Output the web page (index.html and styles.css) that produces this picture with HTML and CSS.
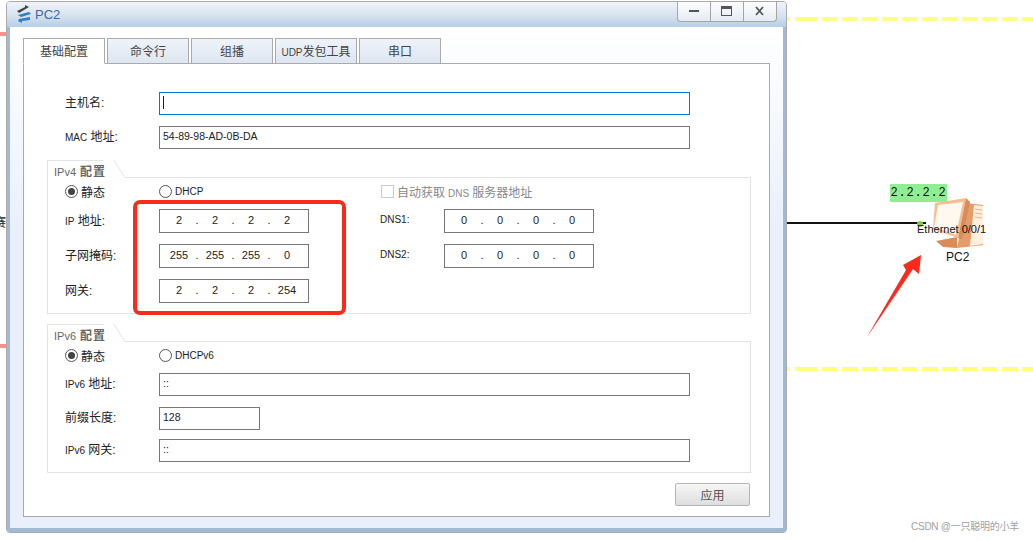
FILE: index.html
```html
<!DOCTYPE html>
<html lang="zh-CN">
<head>
    <meta charset="UTF-8">
    <meta name="viewport" content="width=device-width, initial-scale=1.0">
    <title>PC2</title>
    <link rel="stylesheet" href="styles.css">
</head>
<body>
    <!-- topology canvas behind the dialog -->
    <div class="canvas">
        <div class="dash dash-top"></div>
        <div class="dash dash-bottom"></div>
        <div class="pink pink-top"></div>
        <div class="pink pink-bottom"></div>
        <div class="cut-label">赛</div>
        <div class="link"></div>
        <div class="port-dot"></div>
        <div class="ip-tag">2.2.2.2</div>
        <svg class="pc-icon" width="54" height="56" viewBox="0 0 54 56">
            <path d="M34 6 L51 8 L51 48 L25 51 Z" fill="#e39c6c"/>
            <path d="M42 8 L51 9 L51 47 L38 49 Z" fill="#fff0e0"/>
            <path d="M43 12 L50 13 M43 16 L50 17 M43 20 L50 21" stroke="#e8b48c" stroke-width="1.2"/>
            <path d="M4 44 L25 40 L25 51 L11 50 Z" fill="#d98c56"/>
            <path d="M3 6 L34 1 L26 41 L1 32 Z" fill="#f6bd90"/>
            <path d="M6 8 L31 5 L24 38 L2 30 Z" fill="#fff8ee"/>
            <path d="M34 1 L38 5 L30 42 L26 41 Z" fill="#d98c56"/>
        </svg>
        <div class="port-label">Ethernet 0/0/1</div>
        <div class="pc-label">PC2</div>
        <svg class="arrow" width="60" height="86" viewBox="0 0 60 86">
            <path d="M1 84 L40 17 L37 12 L55 2 L53 21 L47 16 Z" fill="#fc2a1c"/>
        </svg>
        <div class="watermark">CSDN @一只聪明的小羊</div>
    </div>

    <div class="dialog">
        <div class="titlebar">
            <svg class="app-icon" width="16" height="19" viewBox="0 0 16 19">
                <path d="M1 6 L9 2 L9 0 L13 2 L8 5 L3 8 Z" fill="#444"/>
                <path d="M2 10 L13 7 L15 9 L5 12 Z" fill="#2f7fc4"/>
                <path d="M3 14 L14 12 L14 15 L6 16 L6 18 L2 16 Z" fill="#2f7fc4"/>
            </svg>
            <span class="title-text">PC2</span>
            <div class="win-buttons">
                <div class="win-btn">
                    <svg width="11" height="4" viewBox="0 0 11 4"><rect y="1" width="10" height="2" fill="#555"/></svg>
                </div>
                <div class="win-btn">
                    <svg width="12" height="11" viewBox="0 0 12 11"><rect x="0.5" y="0.5" width="10" height="9" fill="none" stroke="#555"/><rect x="0.5" y="0.5" width="10" height="2.5" fill="#555"/></svg>
                </div>
                <div class="win-btn">
                    <svg width="10" height="10" viewBox="0 0 10 10"><path d="M1 1 L8 9 M8 1 L1 9" stroke="#555" stroke-width="1.8"/></svg>
                </div>
            </div>
        </div>

        <div class="dialog-body">
            <div class="tabs">
                <div class="tab active">基础配置</div>
                <div class="tab">命令行</div>
                <div class="tab">组播</div>
                <div class="tab"><span class="en">UDP</span>发包工具</div>
                <div class="tab">串口</div>
            </div>

            <div class="panel">
                <div class="rows top-rows">
                    <div class="row">
                        <label class="row-label">主机名:</label>
                        <div class="field wide focused"><span class="caret"></span></div>
                    </div>
                    <div class="row">
                        <label class="row-label"><span class="en">MAC</span> 地址:</label>
                        <div class="field wide">54-89-98-AD-0B-DA</div>
                    </div>
                </div>

                <div class="group">
                    <div class="legend">IPv4 <b>配置</b></div>
                    <div class="group-box">
                        <div class="row radio-row">
                            <div class="radio-cell"><span class="radio checked"></span>静态</div>
                            <div class="radio-cell"><span class="radio"></span><span class="en">DHCP</span></div>
                            <div class="auto-dns"><span class="checkbox"></span><span>自动获取<span class="en dns-word">DNS</span>服务器地址</span></div>
                        </div>
                        <div class="row">
                            <label class="row-label"><span class="en">IP</span> 地址:</label>
                            <div class="ip-field"><span>2</span><i>.</i><span>2</span><i>.</i><span>2</span><i>.</i><span>2</span></div>
                            <label class="dns-label">DNS1:</label>
                            <div class="ip-field"><span>0</span><i>.</i><span>0</span><i>.</i><span>0</span><i>.</i><span>0</span></div>
                        </div>
                        <div class="row">
                            <label class="row-label">子网掩码:</label>
                            <div class="ip-field"><span>255</span><i>.</i><span>255</span><i>.</i><span>255</span><i>.</i><span>0</span></div>
                            <label class="dns-label">DNS2:</label>
                            <div class="ip-field"><span>0</span><i>.</i><span>0</span><i>.</i><span>0</span><i>.</i><span>0</span></div>
                        </div>
                        <div class="row">
                            <label class="row-label">网关:</label>
                            <div class="ip-field"><span>2</span><i>.</i><span>2</span><i>.</i><span>2</span><i>.</i><span>254</span></div>
                        </div>
                    </div>
                </div>

                <div class="group group-v6">
                    <div class="legend">IPv6 <b>配置</b></div>
                    <div class="group-box">
                        <div class="row radio-row">
                            <div class="radio-cell"><span class="radio checked"></span>静态</div>
                            <div class="radio-cell"><span class="radio"></span><span class="en">DHCPv6</span></div>
                        </div>
                        <div class="row">
                            <label class="row-label"><span class="en">IPv6</span> 地址:</label>
                            <div class="field wide">::</div>
                        </div>
                        <div class="row">
                            <label class="row-label">前缀长度:</label>
                            <div class="field short">128</div>
                        </div>
                        <div class="row tight">
                            <label class="row-label"><span class="en">IPv6</span> 网关:</label>
                            <div class="field wide">::</div>
                        </div>
                    </div>
                </div>

                <div class="actions">
                    <button class="apply-btn" type="button">应用</button>
                </div>
            </div>
        </div>
    </div>

    <!-- annotation drawn over the screenshot -->
    <div class="red-box"></div>
</body>
</html>
```

FILE: styles.css
```css
body {
    font-family: "Liberation Sans", "Noto Sans CJK SC", sans-serif;
    font-size: 12px;
    color: #222;
    background-color: #fff;
    margin: 0;
    width: 1033px;
    height: 541px;
    position: relative;
    overflow: hidden;
}

.en {
    font-size: 10px;
}

/* canvas items */
.dash {
    position: absolute;
    left: 786px;
    width: 247px;
    height: 4px;
    background: repeating-linear-gradient(90deg, #ffff80 0, #ffff80 15px, transparent 15px, transparent 20px);
    background-position: 16px 0;
}

.dash-top {
    top: 17px;
}

.dash-bottom {
    top: 367px;
}

.pink {
    position: absolute;
    left: 0;
    width: 6px;
    height: 4px;
    background-color: #ff8f8f;
}

.pink-top {
    top: 32px;
}

.pink-bottom {
    top: 344px;
}

.cut-label {
    position: absolute;
    left: -6px;
    top: 213px;
    font-size: 12px;
}

.link {
    position: absolute;
    left: 786px;
    top: 222px;
    width: 140px;
    height: 2px;
    background-color: #111;
}

.port-dot {
    position: absolute;
    left: 917px;
    top: 221px;
    width: 6px;
    height: 6px;
    border-radius: 50%;
    background-color: #7ed23e;
}

.ip-tag {
    position: absolute;
    left: 890px;
    top: 184px;
    width: 57px;
    height: 18px;
    line-height: 18px;
    text-align: center;
    background-color: #90ee90;
    font-family: "Liberation Mono", monospace;
    font-size: 12px;
    color: #111;
    letter-spacing: 0.8px;
}

.pc-icon {
    position: absolute;
    left: 932px;
    top: 197px;
}

.port-label {
    position: absolute;
    left: 917px;
    top: 223px;
    font-size: 11px;
    color: #111;
    white-space: nowrap;
}

.pc-label {
    position: absolute;
    left: 946px;
    top: 250px;
    font-size: 12px;
    color: #111;
}

.arrow {
    position: absolute;
    left: 866px;
    top: 253px;
}

.watermark {
    position: absolute;
    left: 911px;
    top: 518px;
    font-size: 10px;
    color: #a0a0a0;
    letter-spacing: -0.25px;
    white-space: nowrap;
}

/* dialog window */
.dialog {
    position: absolute;
    left: 6px;
    top: 1px;
    width: 781px;
    height: 532px;
    box-sizing: border-box;
    border: 1px solid #aaa;
    border-radius: 4px;
    display: flex;
    flex-direction: column;
    overflow: hidden;
}

.titlebar {
    height: 25px;
    flex-shrink: 0;
    display: flex;
    align-items: center;
    padding-left: 9px;
    background: linear-gradient(#f0f3f9, #d9e4f0 50%, #b5cee5);
    position: relative;
}

.app-icon {
    margin-right: 3px;
}

.title-text {
    font-size: 13px;
    color: #3a6ba5;
}

.win-buttons {
    margin-left: auto;
    margin-right: 9px;
    align-self: flex-start;
    display: flex;
    height: 21px;
    box-sizing: border-box;
    margin-top: -1px;
    border: 1px solid #a5a5a5;
    border-top: none;
    border-radius: 0 0 4px 4px;
    background: linear-gradient(#fdfdfe, #e6ecf3);
}

.win-btn {
    width: 32px;
    display: flex;
    align-items: center;
    justify-content: center;
    border-left: 1px solid #a5a5a5;
}

.win-btn:first-child {
    border-left: none;
}

.dialog-body {
    flex: 1;
    display: flex;
    flex-direction: column;
    min-height: 0;
    border: 3px solid #9fbad4;
    border-top: none;
    border-bottom-width: 4px;
    padding: 11px 13px 11px 13px;
    background: linear-gradient(#fff, #e9f0fc 40%);
}

/* tabs */
.tabs {
    display: flex;
    gap: 2px;
    margin-bottom: -1px;
}

.tab {
    width: 82px;
    height: 26px;
    box-sizing: border-box;
    line-height: 26px;
    text-align: center;
    color: #444;
    border: 1px solid #aaa;
    background: linear-gradient(#eff3f9, #dde6f1);
    white-space: nowrap;
}

.tab.active {
    background: #fff;
    border-bottom-color: #fff;
    position: relative;
    z-index: 1;
}

.panel {
    flex: 1;
    border: 1px solid #aaa;
    background-color: #fff;
    padding: 28px 18px 0 23px;
}

/* form rows */
.rows {
    display: flex;
    flex-direction: column;
    gap: 11px;
    padding-left: 18px;
}

.row {
    display: flex;
    align-items: center;
}

.row-label {
    width: 94px;
    flex-shrink: 0;
    padding-bottom: 4px;
}

.dns-label {
    width: 64px;
    margin-left: 71px;
    flex-shrink: 0;
    padding-bottom: 4px;
    font-size: 10px;
}

.field {
    height: 23px;
    box-sizing: border-box;
    border: 1px solid #777;
    line-height: 19px;
    padding-left: 3px;
    font-size: 10.5px;
}

.field.wide {
    width: 531px;
}

.field.short {
    width: 101px;
}

.field.focused {
    border-color: #0078d7;
    position: relative;
}

.caret {
    display: block;
    width: 1px;
    height: 13px;
    margin-top: 3px;
    background-color: #222;
}

.ip-field {
    width: 150px;
    height: 24px;
    box-sizing: border-box;
    border: 1px solid #777;
    padding: 0 0 3px 4px;
    display: flex;
    align-items: center;
    font-size: 11px;
}

.ip-field span {
    width: 30px;
    text-align: center;
}

.ip-field i {
    width: 6px;
    font-style: normal;
    text-align: center;
}

/* group boxes */
.group {
    margin-top: 11px;
}

.group-v6 {
    margin-top: 10px;
}

.legend {
    width: 67px;
    height: 18px;
    box-sizing: border-box;
    margin-bottom: -1px;
    padding-left: 6px;
    line-height: 22px;
    font-size: 11px;
    color: #666;
    border: 1px solid #e3e3e3;
    border-width: 1px 0 0 1px;
    background-color: #fff;
    position: relative;
    z-index: 1;
    white-space: nowrap;
}

.legend b {
    font-size: 12px;
    letter-spacing: 1px;
    margin-left: 1px;
}

.legend::after {
    content: "";
    position: absolute;
    right: -6px;
    top: -1px;
    width: 11px;
    height: 18px;
    box-sizing: border-box;
    border-right: 1px solid #e3e3e3;
    background-color: #fff;
    transform: skewX(33deg);
    z-index: -1;
}

.group-box {
    border: 1px solid #e3e3e3;
    padding: 6px 0 10px 17px;
    display: flex;
    flex-direction: column;
    gap: 11px;
}

.row.tight {
    margin-top: -2px;
}

.radio-row {
    height: 14px;
}

.radio-cell {
    width: 94px;
    display: flex;
    align-items: center;
    flex-shrink: 0;
}

.radio {
    width: 13px;
    height: 13px;
    box-sizing: border-box;
    margin-right: 3px;
    border: 1px solid #555;
    border-radius: 50%;
    display: flex;
    align-items: center;
    justify-content: center;
}

.radio.checked::before {
    content: "";
    width: 7px;
    height: 7px;
    border-radius: 50%;
    background-color: #444;
}

.radio-cell + .radio-cell {
    width: 222px;
}

.auto-dns {
    display: flex;
    align-items: center;
    color: #888;
    white-space: nowrap;
}

.dns-word {
    margin: 0 3px;
}

.checkbox {
    width: 13px;
    height: 13px;
    box-sizing: border-box;
    margin-right: 3px;
    border: 1px solid #ccc;
}

/* bottom button */
.actions {
    display: flex;
    justify-content: flex-end;
    margin-top: 10px;
    padding-right: 1px;
}

.apply-btn {
    width: 75px;
    height: 23px;
    padding: 0;
    font-family: inherit;
    font-size: 12px;
    color: #555;
    border: 1px solid #b4b4b4;
    border-radius: 2px;
    background: linear-gradient(#f6f6f6, #dedede);
}

/* red annotation */
.red-box {
    position: absolute;
    left: 133px;
    top: 200px;
    width: 213px;
    height: 115px;
    box-sizing: border-box;
    border: 4px solid #fc2a1c;
    border-radius: 7px;
}
```
